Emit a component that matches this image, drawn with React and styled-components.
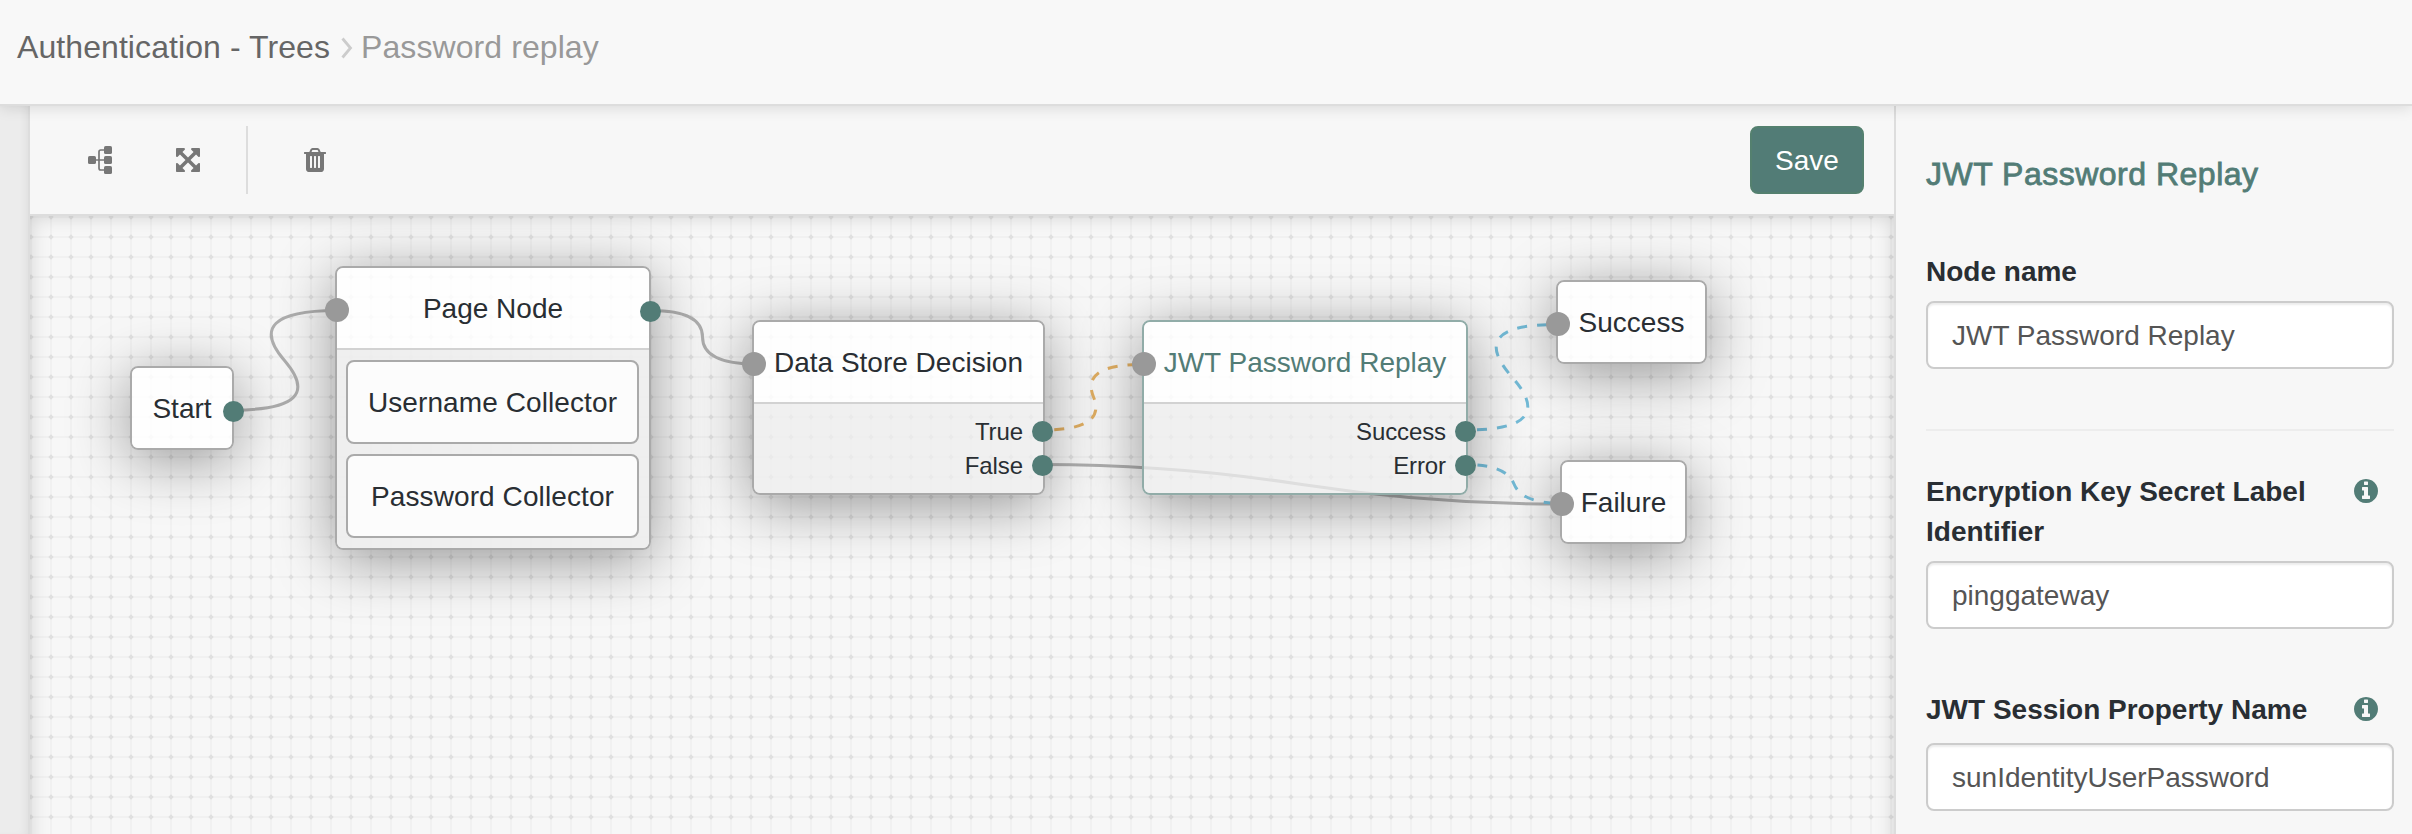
import React from "react";
import styled, { createGlobalStyle, css } from "styled-components";

const GREEN = "#527c76";

const App = () => {
  return (
    <Page>
      <GlobalStyle />
      <Header>
        <Crumb>Authentication - Trees</Crumb>
        <Chevron viewBox="0 0 12 22">
          <path d="M1.5 1.5L9.500 11L1.500 20.500" />
        </Chevron>
        <Crumb $current>Password replay</Crumb>
      </Header>
      <Body>
        <Gutter />
        <Editor>
          <Toolbar>
            <ToolButton aria-label="Auto layout">
              <TreeIcon />
            </ToolButton>
            <ToolButton aria-label="Full screen">
              <ExpandIcon />
            </ToolButton>
            <Separator />
            <ToolButton aria-label="Delete node">
              <TrashIcon />
            </ToolButton>
            <SaveButton>Save</SaveButton>
          </Toolbar>
          <Canvas>
            <Connections />
            <Node $x={100} $y={150} $width={104}>
              <NodeTitle>
                Start
                <OutputPort />
              </NodeTitle>
            </Node>
            <Node $x={305} $y={50} $width={316}>
              <NodeTitle $divided>
                <InputPort />
                Page Node
                <OutputPort />
              </NodeTitle>
              <NodeList>
                <NodeItem>Username Collector</NodeItem>
                <NodeItem>Password Collector</NodeItem>
              </NodeList>
            </Node>
            <Node $x={722} $y={104} $width={293}>
              <NodeTitle $divided>
                <InputPort />
                Data Store Decision
              </NodeTitle>
              <Outcomes>
                <Outcome>
                  True
                  <OutputPort $outcome />
                </Outcome>
                <Outcome>
                  False
                  <OutputPort $outcome />
                </Outcome>
              </Outcomes>
            </Node>
            <Node $x={1112} $y={104} $width={326} $selected>
              <NodeTitle $divided $selected>
                <InputPort />
                JWT Password Replay
              </NodeTitle>
              <Outcomes>
                <Outcome>
                  Success
                  <OutputPort $outcome />
                </Outcome>
                <Outcome>
                  Error
                  <OutputPort $outcome />
                </Outcome>
              </Outcomes>
            </Node>
            <Node $x={1526} $y={64} $width={151}>
              <NodeTitle>
                <InputPort />
                Success
              </NodeTitle>
            </Node>
            <Node $x={1530} $y={244} $width={127}>
              <NodeTitle>
                <InputPort />
                Failure
              </NodeTitle>
            </Node>
          </Canvas>
        </Editor>
        <Panel>
          <PanelTitle>JWT Password Replay</PanelTitle>
          <Label>Node name</Label>
          <Input defaultValue="JWT Password Replay" />
          <Rule />
          <LabelRow>
            <Label>Encryption Key Secret Label Identifier</Label>
            <InfoIcon />
          </LabelRow>
          <Input defaultValue="pinggateway" />
          <LabelRow $spaced>
            <Label>JWT Session Property Name</Label>
            <InfoIcon />
          </LabelRow>
          <Input defaultValue="sunIdentityUserPassword" />
        </Panel>
      </Body>
    </Page>
  );
};

const TreeIcon = () => (
  <Icon viewBox="0 0 28 28">
    <path
      d="M10 14H18M18 4H14.700Q13 4 13 5.700V22.300Q13 24 14.700 24H18"
      fill="none"
      stroke="currentColor"
      strokeWidth="1.7"
    />
    <rect x="2" y="10" width="8" height="8" rx="1.6" />
    <rect x="18" y="0" width="8" height="8" rx="1.6" />
    <rect x="18" y="10" width="8" height="8" rx="1.6" />
    <rect x="18" y="20" width="8" height="8" rx="1.6" />
  </Icon>
);

const ExpandIcon = () => (
  <Icon viewBox="0 0 1792 1792">
    <path d="M1411 541l-355 355 355 355 144-144q29-31 70-14 39 17 39 59v448q0 26-19 45t-45 19h-448q-42 0-59-40-17-39 14-69l144-144-355-355-355 355 144 144q31 30 14 69-17 40-59 40h-448q-26 0-45-19t-19-45v-448q0-42 40-59 39-17 69 14l144 144 355-355-355-355-144 144q-19 19-45 19-12 0-24-5-40-17-40-59v-448q0-26 19-45t45-19h448q42 0 59 40 17 39-14 69l-144 144 355 355 355-355-144-144q-31-30-14-69 17-40 59-40h448q26 0 45 19t19 45v448q0 42-39 59-13 5-25 5-26 0-45-19z" />
  </Icon>
);

const TrashIcon = () => (
  <Icon viewBox="0 0 1792 1792">
    <path d="M704 1376v-704q0-14-9-23t-23-9h-64q-14 0-23 9t-9 23v704q0 14 9 23t23 9h64q14 0 23-9t9-23zm256 0v-704q0-14-9-23t-23-9h-64q-14 0-23 9t-9 23v704q0 14 9 23t23 9h64q14 0 23-9t9-23zm256 0v-704q0-14-9-23t-23-9h-64q-14 0-23 9t-9 23v704q0 14 9 23t23 9h64q14 0 23-9t9-23zm-544-992h448l-48-117q-7-9-17-11h-317q-10 2-17 11zm928 32v64q0 14-9 23t-23 9h-96v948q0 83-47 143.500t-113 60.500h-832q-66 0-113-58.500t-47-141.500v-952h-96q-14 0-23-9t-9-23v-64q0-14 9-23t23-9h309l70-167q15-37 54-63t79-26h320q40 0 79 26t54 63l70 167h309q14 0 23 9t9 23z" />
  </Icon>
);

const InfoIcon = () => (
  <InfoBadge viewBox="0 0 1792 1792">
    <path d="M1152 1376v-160q0-14-9-23t-23-9h-96v-512q0-14-9-23t-23-9h-320q-14 0-23 9t-9 23v160q0 14 9 23t23 9h96v320h-96q-14 0-23 9t-9 23v160q0 14 9 23t23 9h448q14 0 23-9t9-23zm-128-896v-160q0-14-9-23t-23-9h-192q-14 0-23 9t-9 23v160q0 14 9 23t23 9h192q14 0 23-9t9-23zm640 416q0 209-103 385.500t-279.500 279.500-385.500 103-385.500-103-279.500-279.500-103-385.500 103-385.500 279.500-279.500 385.500-103 385.500 103 279.500 279.500 103 385.500z" />
  </InfoBadge>
);

// curves between the ports, in canvas coordinates, over the 20px grid
const Connections = () => (
  <Wires>
    <defs>
      <pattern id="grid" width="20" height="20" patternUnits="userSpaceOnUse">
        <path d="M0 1H20M1 0V20" stroke="#f1f1f1" strokeWidth="2" />
        <path
          d="M1 -1.700L3.700 1L1 3.700L-1.700 1ZM21 -1.700L23.700 1L21 3.700L18.300 1ZM1 18.300L3.700 21L1 23.700L-1.700 21ZM21 18.300L23.700 21L21 23.700L18.300 21Z"
          fill="#e0e0e0"
        />
      </pattern>
    </defs>
    <rect width="100%" height="100%" fill="url(#grid)" />
    <Wire d="M204 194Q297 194 254.500 144.500T306 94.500" />
    <Wire d="M621 94.500Q672.500 94.500 672.500 121T724 148" />
    <Wire d="M1013 248.500Q1142 248.500 1272 268.500T1532 288" />
    <Wire $color="#e0ae62" d="M1013 214Q1077 214 1063.500 181T1114 148.500" />
    <Wire $color="#74bcd8" d="M1436 214Q1529 214 1482 161T1528 108.500" />
    <Wire $color="#74bcd8" d="M1436 248.500Q1476 248.500 1484 268T1532 287.500" />
  </Wires>
);

const GlobalStyle = createGlobalStyle`
  * {
    box-sizing: border-box;
  }

  body {
    margin: 0;
    background: #f7f7f7;
    font-family: "Liberation Sans", Arial, sans-serif;
    font-size: 28px;
    color: #292e33;
  }
`;

const Page = styled.div`
  display: flex;
  flex-direction: column;
  height: 834px;
  overflow: hidden;
`;

const Header = styled.header`
  display: flex;
  flex: none;
  align-items: center;
  height: 106px;
  padding: 0 17px 10px;
  font-size: 32px;
  background: #f8f8f8;
  border-bottom: 2px solid #ddd;
  box-shadow: 0 2px 14px rgba(0, 0, 0, 0.12);
  z-index: 2;
`;

const Crumb = styled.span`
  letter-spacing: 0.08px;
  color: ${({ $current }) => ($current ? "#999" : "#666")};
`;

const Chevron = styled.svg`
  width: 12px;
  height: 22px;
  margin: 2px 8px 0 11px;
  fill: none;
  stroke: #ccc;
  stroke-width: 2.8;
`;

const Body = styled.main`
  display: flex;
  flex: 1;
  min-height: 0;
`;

const Gutter = styled.div`
  width: 30px;
  background: #ececec;
  border-right: 2px solid #ddd;
  box-shadow: inset -6px 0 8px -4px rgba(0, 0, 0, 0.06);
`;

const Editor = styled.section`
  display: flex;
  flex-direction: column;
  width: 1864px;
`;

const Toolbar = styled.div`
  display: flex;
  align-items: center;
  height: 110px;
  padding: 0 30px 0 56px;
  background: #f7f7f7;
  border-bottom: 2px solid #ddd;
`;

const ToolButton = styled.button`
  display: flex;
  padding: 0;
  margin-right: 60px;
  border: 0;
  background: none;
  color: #777;
`;

const Icon = styled.svg`
  width: 28px;
  height: 28px;
  fill: currentColor;
`;

const Separator = styled.div`
  width: 2px;
  height: 68px;
  margin: 0 53px 0 -16px;
  background: #ddd;
`;

const SaveButton = styled.button`
  width: 114px;
  height: 68px;
  margin-left: auto;
  padding: 1px 0 0;
  border: 2px solid #54806f;
  border-radius: 8px;
  background: ${GREEN};
  color: #fff;
  font: inherit;
`;

const Canvas = styled.div`
  position: relative;
  flex: 1;
  overflow: hidden;
  background: #f7f7f7;

  &::after {
    content: "";
    position: absolute;
    inset: 0 0 -30px;
    box-shadow: inset 0 0 20px rgba(0, 0, 0, 0.16);
    pointer-events: none;
  }
`;

const Wires = styled.svg`
  display: block;
  width: 100%;
  height: 100%;
`;

const Wire = styled.path`
  fill: none;
  stroke: ${({ $color }) => $color || "#aeaeae"};
  stroke-width: 3;

  ${({ $color }) =>
    $color &&
    css`
      stroke-dasharray: 10 10;
      stroke-dashoffset: -11;
    `}
`;

const Node = styled.div`
  position: absolute;
  left: ${({ $x }) => $x}px;
  top: ${({ $y }) => $y}px;
  width: ${({ $width }) => $width}px;
  border: 2px solid ${({ $selected }) => ($selected ? "#91aca8" : "#aaa")};
  border-radius: 8px;
  box-shadow: 0 10px 60px rgba(0, 0, 0, 0.4);
`;

const NodeTitle = styled.div`
  position: relative;
  display: flex;
  align-items: center;
  justify-content: center;
  height: ${({ $divided }) => ($divided ? 82 : 80)}px;
  padding-top: 2px;
  border-radius: ${({ $divided }) => ($divided ? "6px 6px 0 0" : "6px")};
  border-bottom: ${({ $divided }) => ($divided ? "2px solid #d2d2d2" : 0)};
  background: rgba(255, 255, 255, 0.83);
  color: ${({ $selected }) => ($selected ? GREEN : "inherit")};
  white-space: nowrap;
`;

const InputPort = styled.span`
  position: absolute;
  left: -12px;
  top: 30px;
  width: 24px;
  height: 24px;
  border-radius: 50%;
  background: #999;
`;

const OutputPort = styled.span`
  position: absolute;
  right: ${({ $outcome }) => ($outcome ? -10 : -12)}px;
  top: ${({ $outcome }) => ($outcome ? 7 : 33)}px;
  width: 21px;
  height: 21px;
  border-radius: 50%;
  background: ${GREEN};
`;

const NodeList = styled.div`
  display: flex;
  flex-direction: column;
  gap: 10px;
  padding: 10px 10px 10px 9px;
  border-radius: 0 0 6px 6px;
  background: rgba(238, 238, 238, 0.93);
`;

const NodeItem = styled.div`
  display: flex;
  align-items: center;
  justify-content: center;
  height: 84px;
  padding-top: 2px;
  border: 2px solid #aaa;
  border-radius: 8px;
  background: rgba(255, 255, 255, 0.8);
  letter-spacing: 0.1px;
`;

const Outcomes = styled.div`
  padding: 10px 0 11px;
  border-radius: 0 0 6px 6px;
  background: rgba(238, 238, 238, 0.75);
`;

const Outcome = styled.div`
  position: relative;
  height: 34px;
  padding: 1px 20px 0 0;
  font-size: 24px;
  line-height: 34px;
  letter-spacing: -0.1px;
  text-align: right;
`;

const Panel = styled.aside`
  flex: 1;
  padding: 48px 18px 0 30px;
  border-left: 2px solid #ddd;
  background: #f7f7f7;
`;

const PanelTitle = styled.h3`
  margin: 0 0 57px;
  font-size: 32px;
  font-weight: 400;
  line-height: 40px;
  letter-spacing: 0.5px;
  color: ${GREEN};
  -webkit-text-stroke: 0.8px ${GREEN};
`;

const Label = styled.label`
  display: block;
  padding-top: 1px;
  font-weight: 700;
  line-height: 40px;
`;

const Input = styled.input`
  display: block;
  width: 100%;
  height: 68px;
  margin-top: 9px;
  padding: 2px 24px 0;
  border: 2px solid #ccc;
  border-radius: 8px;
  background: #fff;
  box-shadow: inset 0 2px 2px rgba(0, 0, 0, 0.075);
  color: #555;
  font: inherit;
`;

const Rule = styled.hr`
  height: 2px;
  margin: 60px 0 40px;
  border: 0;
  background: #ededed;
`;

const LabelRow = styled.div`
  display: flex;
  justify-content: space-between;
  gap: 20px;
  padding-right: 14px;

  ${({ $spaced }) =>
    $spaced &&
    css`
      margin-top: 60px;
      padding-bottom: 4px;
    `}
`;

const InfoBadge = styled.svg`
  flex: none;
  width: 28px;
  height: 28px;
  margin-top: 6px;
  fill: ${GREEN};
`;

export default App;
